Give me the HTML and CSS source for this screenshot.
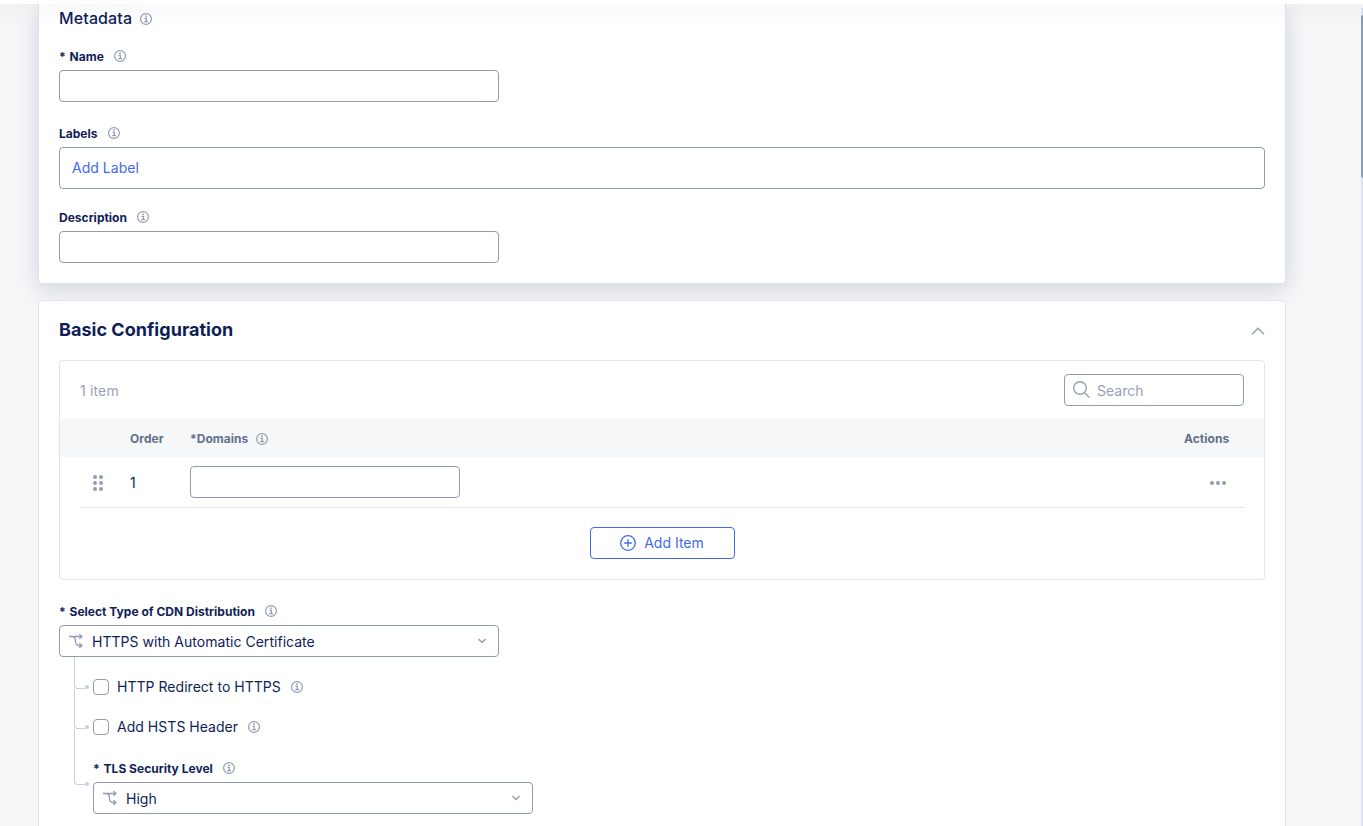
FILE: index.html
```html
<!DOCTYPE html>
<html lang="en">
<head>
<meta charset="utf-8">
<title>CDN Distribution</title>
<link rel="stylesheet" href="styles.css">
</head>
<body>
<svg class="defs" width="0" height="0">
  <symbol id="info" viewBox="0 0 12 12"><circle cx="6" cy="6" r="5.4" fill="none" stroke="currentColor" stroke-width="1.2"/><path d="M4.500 5.300H6.300V8.600M4.200 8.700H8" fill="none" stroke="currentColor" stroke-width="1.250"/><circle cx="6" cy="3.200" r=".9" fill="currentColor"/></symbol>
  <symbol id="branch" viewBox="0 0 14 14"><path d="M0 2.500H13M10.300.2 13 2.500l-2.700 2.300M3.200 2.500c2.700.1 3.200 1.500 3.200 4 0 3.400.8 5 3.600 5H13M10.300 9.200l2.700 2.300-2.700 2.300" fill="none" stroke="currentColor" stroke-width="1.300"/></symbol>
  <symbol id="down" viewBox="0 0 8 6"><path d="M.5 1 4 4.400 7.500 1" fill="none" stroke="currentColor" stroke-width="1.400"/></symbol>
</svg>
<main class="page">
  <div class="page-shade"></div>
  <section class="card card-raised">
    <h2 class="subheading"><span>Metadata</span><svg class="info"><use href="#info"/></svg></h2>
    <div class="field name-field">
      <label class="label"><span>* <span class="label-name">Name</span></span><svg class="info"><use href="#info"/></svg></label>
      <div class="box"></div>
    </div>
    <div class="field labels-field">
      <label class="label"><span>Labels</span><svg class="info"><use href="#info"/></svg></label>
      <div class="box box-tags"><a class="link">Add Label</a></div>
    </div>
    <div class="field description-field">
      <label class="label"><span>Description</span><svg class="info"><use href="#info"/></svg></label>
      <div class="box"></div>
    </div>
  </section>

  <section class="card card-config">
    <header class="card-head">
      <h1 class="heading">Basic Configuration</h1>
      <svg class="collapse" viewBox="0 0 14 8"><path d="M1 7.200 7 1.200l6 6" fill="none" stroke="currentColor" stroke-width="1.400"/></svg>
    </header>
    <div class="panel">
      <div class="toolbar">
        <span class="count">1 item</span>
        <div class="search">
          <svg class="search-icon" viewBox="0 0 17 17"><circle cx="7" cy="7" r="6.300" fill="none" stroke="currentColor" stroke-width="1.400"/><path d="m11.400 11.400 5 5" stroke="currentColor" stroke-width="1.400"/></svg>
          <span>Search</span>
        </div>
      </div>
      <div class="table-head"><span></span><span>Order</span><span class="th-domains"><span>*Domains</span><svg class="info"><use href="#info"/></svg></span><span class="th-actions">Actions</span></div>
      <div class="table-row">
        <svg class="grip" viewBox="0 0 10 16" fill="currentColor"><circle cx="2" cy="2" r="2"/><circle cx="8" cy="2" r="2"/><circle cx="2" cy="8" r="2"/><circle cx="8" cy="8" r="2"/><circle cx="2" cy="14" r="2"/><circle cx="8" cy="14" r="2"/></svg>
        <span class="order">1</span>
        <div class="box box-domain"></div>
        <svg class="more" viewBox="0 0 16 4" fill="currentColor"><circle cx="2" cy="2" r="2"/><circle cx="8" cy="2" r="2"/><circle cx="14" cy="2" r="2"/></svg>
      </div>
      <div class="panel-foot">
        <button class="add"><svg class="plus" viewBox="0 0 16 16"><circle cx="8" cy="8" r="7.300" fill="none" stroke="currentColor" stroke-width="1.300"/><path d="M8 4.200v7.600M4.200 8h7.600" stroke="currentColor" stroke-width="1.300"/></svg><span class="add-text">Add Item</span></button>
      </div>
    </div>

    <div class="field type-field">
      <label class="label"><span>* <span class="label-name">Select Type of CDN Distribution</span></span><svg class="info"><use href="#info"/></svg></label>
      <div class="box select"><svg class="branch"><use href="#branch"/></svg><span class="value">HTTPS with Automatic Certificate</span><svg class="down"><use href="#down"/></svg></div>
    </div>
    <div class="children">
      <div class="child check child-first"><i class="checkbox"></i><span class="check-text">HTTP Redirect to HTTPS</span><svg class="info"><use href="#info"/></svg></div>
      <div class="child check child-second"><i class="checkbox"></i><span class="check-text">Add HSTS Header</span><svg class="info"><use href="#info"/></svg></div>
      <div class="child child-tls">
        <label class="label"><span>* <span class="label-name">TLS Security Level</span></span><svg class="info"><use href="#info"/></svg></label>
        <div class="box select"><svg class="branch"><use href="#branch"/></svg><span class="value">High</span><svg class="down"><use href="#down"/></svg></div>
      </div>
    </div>
  </section>
  <div class="scrollbar"><div class="thumb"></div></div>
</main>
</body>
</html>
```
FILE: styles.css
```css
* { box-sizing: border-box; }
body {
  margin: 0;
  height: 826px;
  overflow: hidden;
  background: #fff;
  color: #0f1e57;
  font-family: Inter, "Liberation Sans", sans-serif;
  font-size: 14px;
  letter-spacing: .03px;
}
.defs { position: absolute; }
.page {
  position: relative;
  height: 822px;
  margin-top: 4px;
  padding: 0 77px 0 38px;
  overflow: hidden;
  background: #f5f7f9;
}
.page-shade {
  position: absolute;
  z-index: 3;
  inset: 0 0 auto;
  height: 24px;
  background: linear-gradient(rgba(0, 0, 0, .022), rgba(0, 0, 0, 0));
}
.card { position: relative; background: #fff; border: 1px solid #dfe3ef; }
.card-raised {
  height: 280px;
  padding: 4px 20px 0;
  border-top: 0;
  border-radius: 0 0 4px 4px;
  box-shadow: 0 6px 24px rgba(15, 20, 50, .15);
}
.card-config {
  height: 560px;
  margin-top: 16px;
  padding: 0 20px;
  border-radius: 4px 4px 0 0;
}
.subheading {
  display: flex;
  align-items: center;
  gap: 8px;
  height: 21px;
  margin: 0;
  font-size: 16px;
  font-weight: 500;
  letter-spacing: .12px;
}
.subheading span { margin-bottom: 2px; }
.info { width: 12px; height: 12px; flex: none; color: #929db0; }
.name-field { margin-top: 18px; }
.labels-field { margin-top: 22px; }
.description-field { margin-top: 19px; }
.label {
  display: flex;
  align-items: center;
  gap: 10px;
  height: 18px;
  margin-bottom: 5px;
  font-size: 12px;
  font-weight: 700;
  letter-spacing: .01px;
}
.label-name { margin-left: 1px; }
.box {
  display: flex;
  align-items: center;
  width: 440px;
  height: 32px;
  border: 1px solid #8f9bb0;
  border-radius: 4px;
  background: #fff;
}
.box-tags { width: 100%; height: 42px; padding: 0 0 2px 12px; }
.link { color: #4268ee; }
.card-head {
  display: flex;
  align-items: center;
  justify-content: space-between;
  height: 59px;
}
.heading { margin: 0 0 2px; font-size: 18px; line-height: 24px; font-weight: 700; }
.collapse { width: 14px; height: 8px; color: #929db0; }
.panel { height: 220px; border: 1px solid #e1e5f0; border-radius: 4px; }
.toolbar {
  display: flex;
  align-items: center;
  justify-content: space-between;
  height: 58px;
  padding: 0 20px;
}
.count { color: #98a2b5; letter-spacing: .15px; }
.search {
  display: flex;
  align-items: center;
  gap: 7px;
  width: 180px;
  height: 32px;
  padding-left: 8px;
  border: 1px solid #8f9bb0;
  border-radius: 4px;
  color: #98a2b5;
}
.search-icon { width: 17px; height: 17px; margin-top: -1px; }
.table-head, .table-row {
  display: grid;
  grid-template-columns: 50px 60px 1fr 60px;
  align-items: center;
}
.table-head {
  height: 38px;
  padding: 0 20px;
  background: #f5f7f9;
  color: #62708a;
  font-size: 12px;
  font-weight: 700;
}
.th-domains { display: flex; align-items: center; gap: 8px; }
.th-domains .info { margin-top: 1px; }
.table-row { height: 51px; margin: 0 20px; border-bottom: 1px solid #e1e5f0; }
.grip { width: 10px; height: 16px; margin: 2px 0 0 13px; color: #929db0; }
.box-domain { width: 270px; }
.more { width: 16px; height: 4px; margin: 2px 0 0 26px; color: #929db0; }
.panel-foot { display: flex; justify-content: center; padding-top: 19px; }
.add {
  display: flex;
  align-items: center;
  justify-content: center;
  gap: 8px;
  width: 145px;
  height: 32px;
  padding: 0;
  border: 1px solid #4268ee;
  border-radius: 4px;
  background: #fff;
  color: #4268ee;
  font: inherit;
}
.plus { width: 16px; height: 16px; }
.add-text { margin-bottom: 2px; }
.type-field { margin-top: 22px; }
.select { padding: 0 12px 0 9px; }
.branch { width: 14px; height: 14px; }
.branch, .down { color: #929db0; }
.value { flex: 1; margin-left: 9px; }
.down { width: 8px; height: 6px; }
.children { padding: 10px 0 0 34px; }
.child { position: relative; }
.check { display: flex; align-items: center; height: 40px; }
.check .info { margin-left: 10px; }
.check-text { margin-bottom: 2px; }
.checkbox {
  width: 16px;
  height: 16px;
  margin-right: 8px;
  border: 1px solid #8f9bb0;
  border-radius: 4px;
}
.child-tls { padding-top: 12px; }
/* Branch line leading from the parent select to each dependent field. */
.child::before {
  content: "";
  position: absolute;
  left: -19px;
  width: 10px;
  border: solid #c9cfdf;
  border-width: 0 0 1px 1px;
  border-bottom-left-radius: 4px;
}
.child::after {
  content: "";
  position: absolute;
  left: -8px;
  width: 4px;
  height: 4px;
  border-radius: 50%;
  background: #c9cfdf;
}
.child-first::before { top: -10px; height: 31px; }
.child-second::before { top: -18px; height: 39px; }
.child-tls::before { top: -18px; height: 55px; }
.check::after { top: 18px; }
.child-tls::after { top: 35px; }
.type-field .label, .child-tls .label, .name-field .label, .labels-field .label, .description-field .label { padding-bottom: 0; }
.scrollbar {
  position: absolute;
  top: 4px;
  right: 0;
  bottom: 0;
  width: 2px;
  background: #dfe3ef;
}
.thumb { height: 163px; margin-top: 7px; border-radius: 2px 0 0 2px; background: #929db0; }
```
